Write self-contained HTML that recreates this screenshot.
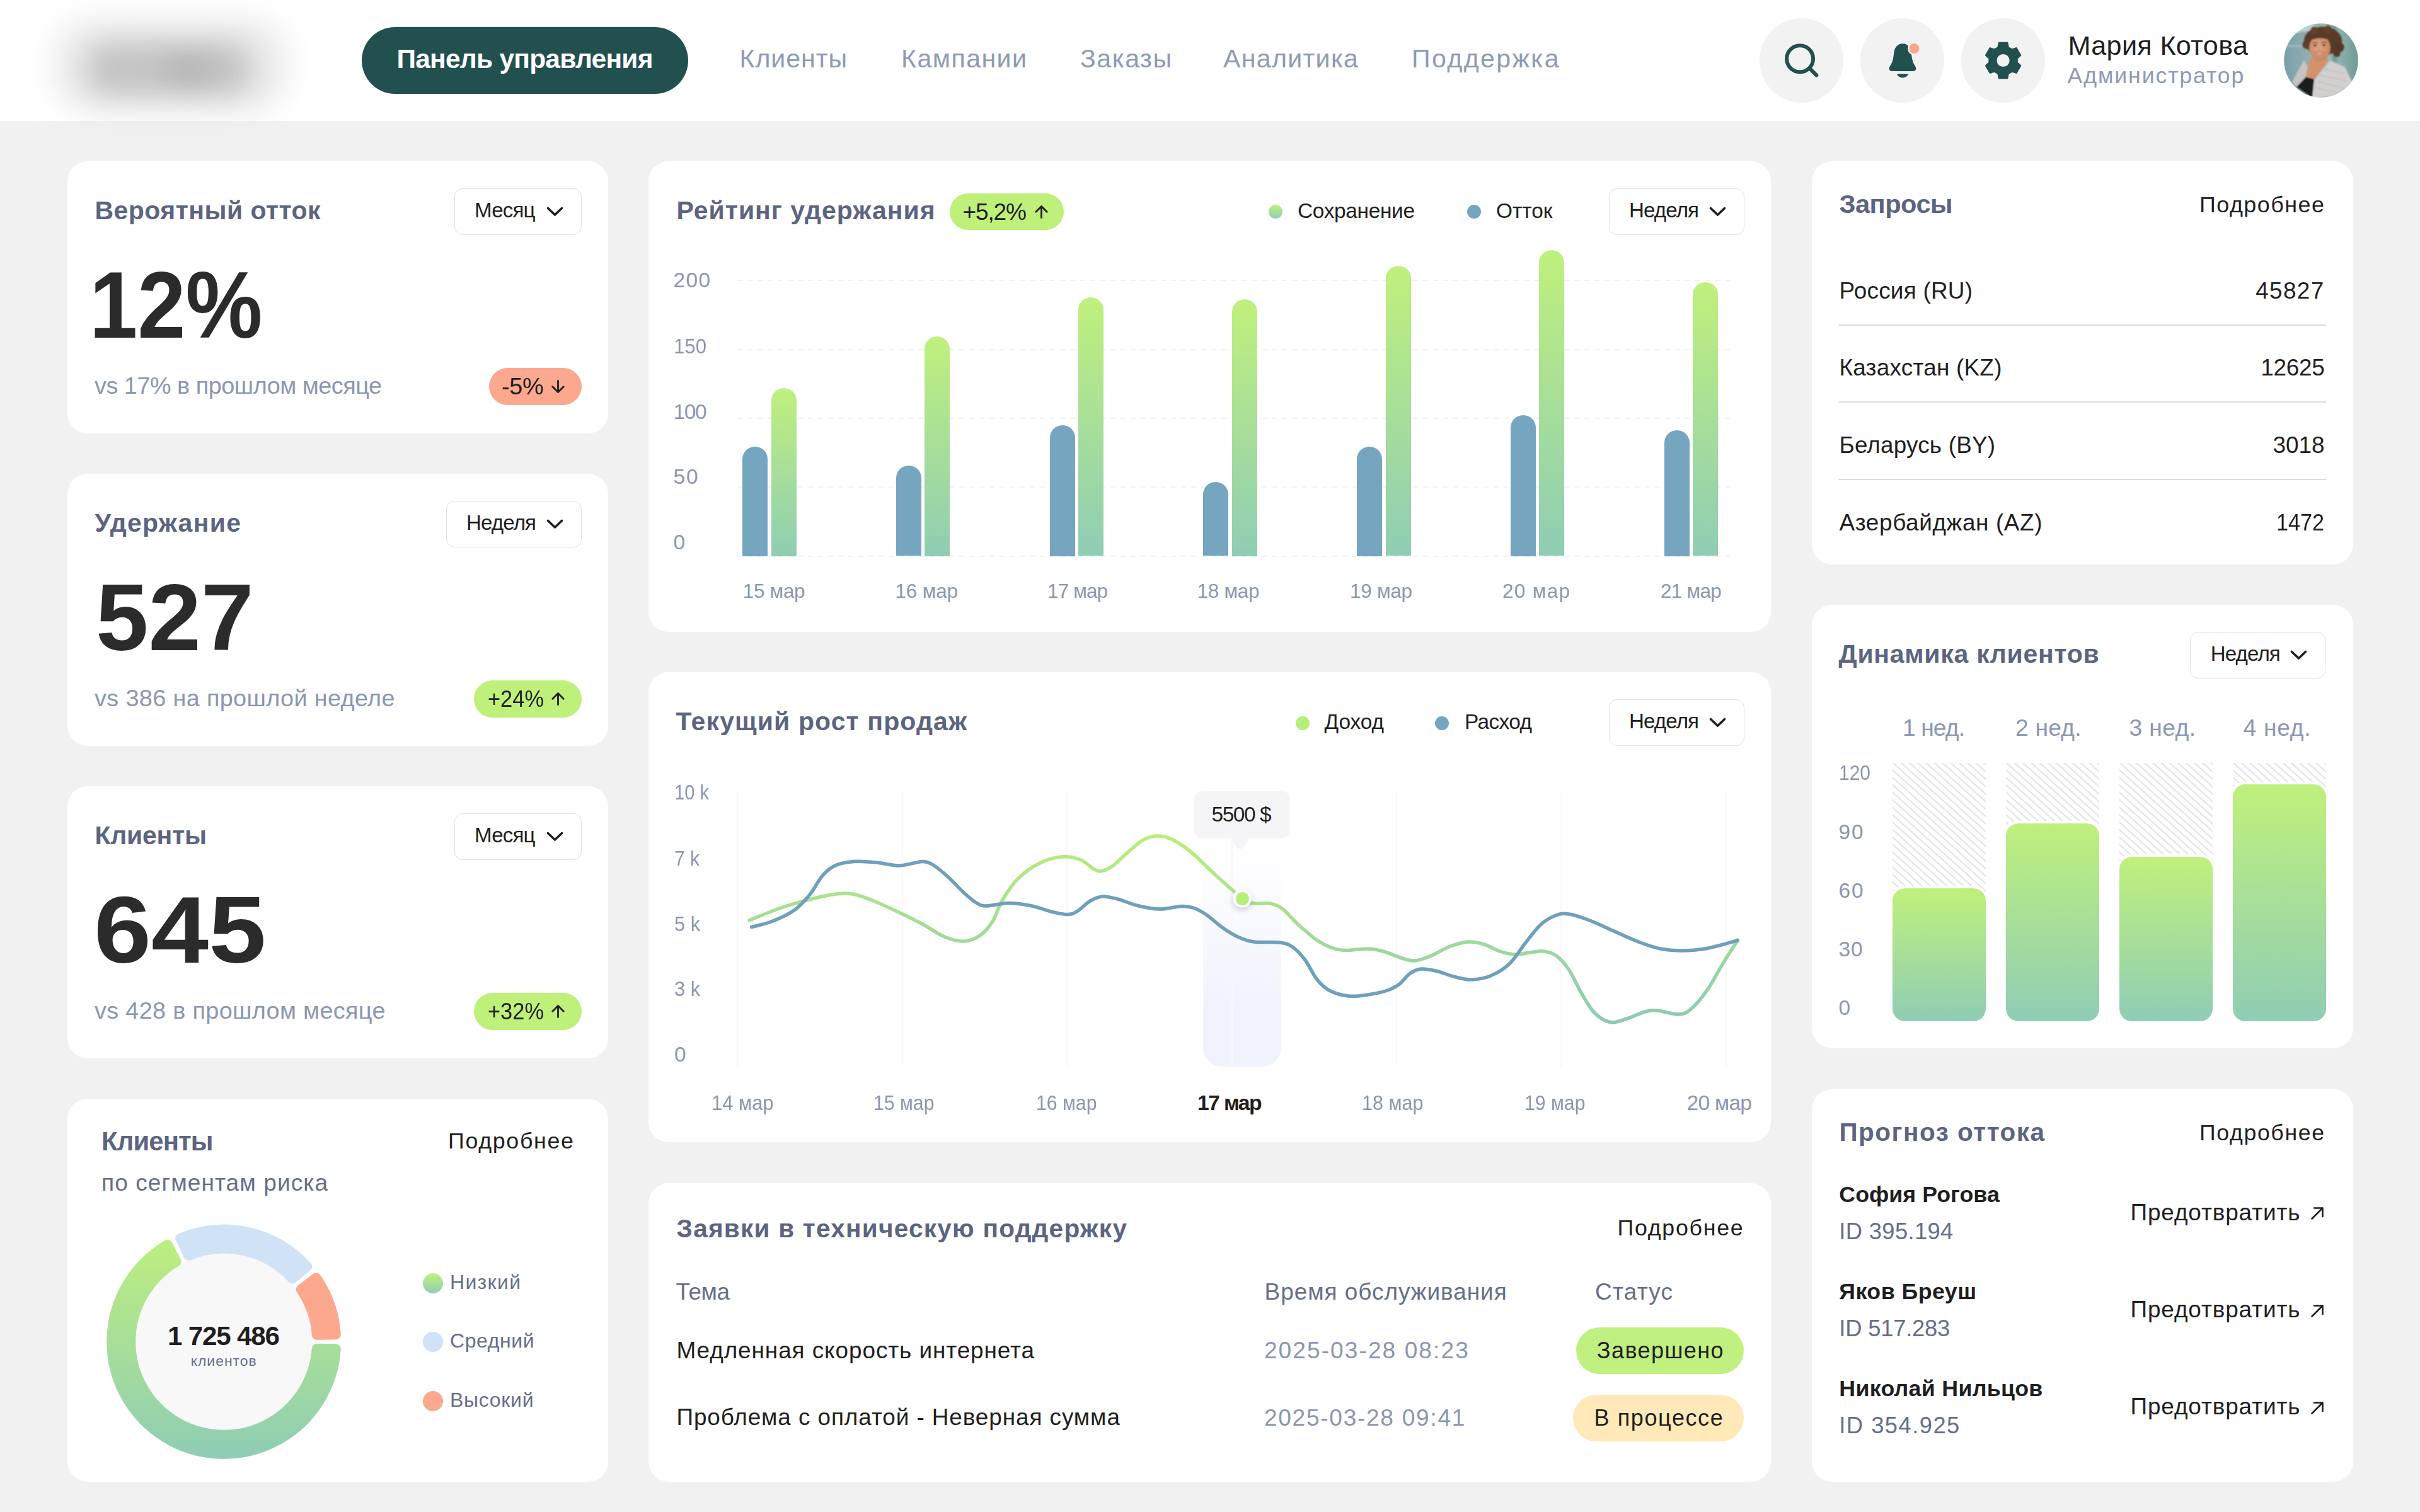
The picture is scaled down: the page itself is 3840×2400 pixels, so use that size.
<!DOCTYPE html>
<html lang="ru"><head><meta charset="utf-8"><title>Панель управления</title>
<style>
html,body{margin:0;padding:0}
body{width:3840px;height:2400px;overflow:hidden;background:#f1f1f1;font-family:"Liberation Sans",sans-serif}
#p{position:relative;width:3840px;height:2400px;overflow:hidden;background:#f1f1f1}
#p>div,#p>span,#p>svg{position:absolute;display:block}
#p>span{white-space:pre}
</style></head><body><div id="p">
<div style="left:0px;top:0px;width:3840px;height:192px;background:#fff;border-radius:0px;"></div>
<div style="left:85px;top:30px;width:370px;height:148px;background:#ebebeb;border-radius:60px;filter:blur(24px)"></div>
<div style="left:136px;top:67px;width:264px;height:84px;background:#c3c3c3;border-radius:40px;filter:blur(22px)"></div>
<div style="left:262px;top:90px;width:76px;height:40px;background:#a6a6a6;border-radius:20px;filter:blur(20px);opacity:.55"></div>
<div style="left:574px;top:42.5px;width:518px;height:106.5px;background:#21504f;border-radius:54px;"></div>
<div style="left:2791.75px;top:29px;width:133.5px;height:133.5px;background:#f2f2f2;border-radius:67px;"></div>
<div style="left:2951.75px;top:29px;width:133.5px;height:133.5px;background:#f2f2f2;border-radius:67px;"></div>
<div style="left:3111.75px;top:29px;width:133.5px;height:133.5px;background:#f2f2f2;border-radius:67px;"></div>
<svg style="left:2820px;top:56px" width="80" height="80" viewBox="2820 56 80 80"><circle cx="2856.1" cy="93.2" r="21" fill="none" stroke="#21504f" stroke-width="6"/><path d="M2871.5 108.5L2882.3 119.3" stroke="#21504f" stroke-width="6" stroke-linecap="round"/></svg>
<svg style="left:2980px;top:56px" width="80" height="80" viewBox="2980 56 80 80">
<path d="M3019 69.2C3023 69.2 3026 70.5 3028 73C3031.5 76.5 3032.3 80 3033 86C3033.8 93 3035 98.5 3037.5 102.5C3039 105 3040.3 106.5 3040.3 109C3040.3 111.3 3038.6 112.9 3036.3 112.9H3001.7C2999.4 112.9 2997.7 111.3 2997.7 109C2997.7 106.5 2999 105 3000.5 102.5C3003 98.5 3004.2 93 3005 86C3005.7 80 3006.5 76.5 3010 73C3012 70.5 3015 69.2 3019 69.2Z" fill="#21504f"/>
<path d="M3010 117.2H3028C3027 121 3023.5 123.2 3019 123.2C3014.5 123.2 3011 121 3010 117.2Z" fill="#21504f"/>
<circle cx="3037.5" cy="77.1" r="10.4" fill="#f2f2f2"/><circle cx="3037.5" cy="77.1" r="8" fill="#f9a58c"/></svg>
<svg style="left:3140px;top:56px" width="80" height="80" viewBox="3140 56 80 80"><path d="M3186.48 75.46L3184.99 68.33L3172.21 68.33L3170.72 75.46L3164.75 78.90L3157.83 76.63L3151.44 87.70L3156.87 92.56L3156.87 99.44L3151.44 104.30L3157.83 115.37L3164.75 113.10L3170.72 116.54L3172.21 123.67L3184.99 123.67L3186.48 116.54L3192.45 113.10L3199.37 115.37L3205.76 104.30L3200.33 99.44L3200.33 92.56L3205.76 87.70L3199.37 76.63L3192.45 78.90ZM3167.0 96a11.6 11.6 0 1 0 23.2 0a11.6 11.6 0 1 0 -23.2 0Z" fill="#21504f" fill-rule="evenodd" stroke="#21504f" stroke-width="3" stroke-linejoin="round"/></svg>
<svg style="left:3624px;top:37px" width="118" height="118" viewBox="0 0 118 118"><defs><clipPath id="av"><circle cx="59" cy="59" r="58.8"/></clipPath>
<linearGradient id="avbg" x1="0" y1="0" x2="1" y2="0"><stop offset="0" stop-color="#7a9ca6"/><stop offset=".35" stop-color="#8fb0b3"/><stop offset=".62" stop-color="#9bbab6"/><stop offset=".66" stop-color="#6f9795"/><stop offset=".72" stop-color="#8db2ad"/><stop offset="1" stop-color="#6c9693"/></linearGradient>
<radialGradient id="avf" cx=".45" cy=".45" r=".6"><stop offset="0" stop-color="#e2a583"/><stop offset="1" stop-color="#c58461"/></radialGradient>
<filter id="avb" x="-5%" y="-5%" width="110%" height="110%"><feGaussianBlur stdDeviation="0.9"/></filter></defs>
<g clip-path="url(#av)"><g filter="url(#avb)"><rect x="-4" y="-4" width="126" height="126" fill="url(#avbg)"/>
<path d="M20 6L50 2L48 10L16 16Z" fill="#c9d8d8" opacity=".8"/>
<path d="M4 34H40V38H4Z" fill="#a9c2c4" opacity=".6"/>
<path d="M32 58L13 93L20 101L45 119L92 113L108 93L97 70L74 59L49 88Z" fill="#c6c3c3"/>
<path d="M45 119L92 113L108 93L97 70L74 59L48 90Z" fill="#d2cfcf"/>
<path d="M60 72L96 80M56 82L100 92M52 92L100 104M50 102L92 112" stroke="#b9b6b8" stroke-width="1.2" fill="none"/>
<path d="M41 56L72 56L49 89L35 84Z" fill="#d4916c"/>
<path d="M35 85L48 88.5L45 119L20 101Z" fill="#1a1a1f"/>
<ellipse cx="62" cy="28" rx="30.5" ry="23" fill="#5a3b2c"/>
<circle cx="36" cy="34" r="7" fill="#5f3f2e"/><circle cx="88" cy="38" r="8" fill="#563829"/><circle cx="84" cy="48" r="6" fill="#5a3b2c"/><circle cx="70" cy="9" r="6" fill="#63432f"/><circle cx="48" cy="11" r="6" fill="#63432f"/>
<ellipse cx="57" cy="39.5" rx="16.8" ry="20.5" fill="url(#avf)"/>
<path d="M41 28C46 17 66 15 73 27C66 23 50 22 41 28Z" fill="#5a3b2c"/>
<ellipse cx="49.5" cy="35" rx="2.6" ry="1.5" fill="#3a2418"/><ellipse cx="63.5" cy="34.5" rx="2.6" ry="1.5" fill="#3a2418"/>
<path d="M45.5 31.5Q49.5 29.5 53.5 31.5M59.5 31Q63.5 29 67.5 31" stroke="#4a2e20" stroke-width="1.1" fill="none"/>
<path d="M55 37L54 43.5L58 43.5" stroke="#b87755" stroke-width="1" fill="none"/>
<path d="M48.5 46.5Q56.5 53 64.5 46.5Q56.5 49 48.5 46.5Z" fill="#f4e6e3" stroke="#c46a62" stroke-width="1"/>
</g></g></svg>
<div style="left:106.5px;top:256px;width:858.5px;height:432px;background:#fff;border-radius:32px;"></div>
<div style="left:720.5px;top:299px;width:202px;height:74px;box-sizing:border-box;border:1.6px solid #dfe0ea;border-radius:13px;background:#fff"></div>
<svg style="left:864.5px;top:326px" width="31" height="20" viewBox="-3 -3 31 20"><path d="M1.5 1.5L12.5 12L23.5 1.5" fill="none" stroke="#1f1f1f" stroke-width="3.6" stroke-linecap="round" stroke-linejoin="round"/></svg>
<div style="left:776px;top:584px;width:146.5px;height:58.5px;background:#fca88f;border-radius:30px;"></div>
<svg style="left:874.8px;top:603px" width="21" height="21" viewBox="0 0 21 21"><path d="M10.5 1.4V19.4M1.8 10.8L10.5 19.4L19.2 10.8" fill="none" stroke="#1f1f1f" stroke-width="2.8" stroke-linecap="round" stroke-linejoin="round"/></svg>
<div style="left:106.5px;top:752px;width:858.5px;height:432px;background:#fff;border-radius:32px;"></div>
<div style="left:707.5px;top:795px;width:215px;height:74px;box-sizing:border-box;border:1.6px solid #dfe0ea;border-radius:13px;background:#fff"></div>
<svg style="left:864.5px;top:822px" width="31" height="20" viewBox="-3 -3 31 20"><path d="M1.5 1.5L12.5 12L23.5 1.5" fill="none" stroke="#1f1f1f" stroke-width="3.6" stroke-linecap="round" stroke-linejoin="round"/></svg>
<div style="left:752px;top:1080px;width:170.5px;height:58.5px;background:#bef07a;border-radius:30px;"></div>
<svg style="left:874.8px;top:1099px" width="21" height="21" viewBox="0 0 21 21"><path d="M10.5 19.6V1.6M1.8 10.2L10.5 1.6L19.2 10.2" fill="none" stroke="#1f1f1f" stroke-width="2.8" stroke-linecap="round" stroke-linejoin="round"/></svg>
<div style="left:106.5px;top:1248px;width:858.5px;height:432px;background:#fff;border-radius:32px;"></div>
<div style="left:720.5px;top:1291px;width:202px;height:74px;box-sizing:border-box;border:1.6px solid #dfe0ea;border-radius:13px;background:#fff"></div>
<svg style="left:864.5px;top:1318px" width="31" height="20" viewBox="-3 -3 31 20"><path d="M1.5 1.5L12.5 12L23.5 1.5" fill="none" stroke="#1f1f1f" stroke-width="3.6" stroke-linecap="round" stroke-linejoin="round"/></svg>
<div style="left:752px;top:1576px;width:170.5px;height:58.5px;background:#bef07a;border-radius:30px;"></div>
<svg style="left:874.8px;top:1595px" width="21" height="21" viewBox="0 0 21 21"><path d="M10.5 19.6V1.6M1.8 10.2L10.5 1.6L19.2 10.2" fill="none" stroke="#1f1f1f" stroke-width="2.8" stroke-linecap="round" stroke-linejoin="round"/></svg>
<div style="left:106.5px;top:1744px;width:858.5px;height:607.5px;background:#fff;border-radius:32px;"></div>
<svg style="left:150px;top:1924px" width="420" height="412" viewBox="150 1924 420 412"><defs><linearGradient id="dg" gradientUnits="userSpaceOnUse" x1="0" y1="1950" x2="0" y2="2316"><stop offset="0" stop-color="#c0f07c"/><stop offset="1" stop-color="#8fcdb5"/></linearGradient></defs><circle cx="355.25" cy="2129.75" r="141" fill="#f8f8f9"/><path d="M532.87 2141.31A178 178 0 1 1 265.65 1975.95L279.59 2002.55A148 148 0 1 0 502.84 2140.71Z" fill="url(#dg)" stroke="url(#dg)" stroke-width="16" stroke-linejoin="round"/><path d="M286.34 1965.63A178 178 0 0 1 487.27 2010.36L464.11 2029.48A148 148 0 0 0 299.20 1992.77Z" fill="#cfe2f6" stroke="#cfe2f6" stroke-width="16" stroke-linejoin="round"/><path d="M501.64 2028.48A178 178 0 0 1 532.87 2118.19L502.84 2118.79A148 148 0 0 0 477.73 2046.66Z" fill="#fca88f" stroke="#fca88f" stroke-width="16" stroke-linejoin="round"/></svg>
<div style="left:670.5px;top:2021px;width:32px;height:32px;border-radius:50%;background:linear-gradient(#c0f07c,#8fcdb5)"></div>
<div style="left:670.5px;top:2114px;width:32px;height:32px;border-radius:50%;background:#cfe2f6"></div>
<div style="left:670.5px;top:2208px;width:32px;height:32px;border-radius:50%;background:#fca88f"></div>
<div style="left:1029px;top:256px;width:1781px;height:746.5px;background:#fff;border-radius:32px;"></div>
<div style="left:1506.5px;top:306.5px;width:181.5px;height:58.5px;background:#bef07a;border-radius:30px;"></div>
<svg style="left:1641.5px;top:325.5px" width="21" height="21" viewBox="0 0 21 21"><path d="M10.5 19.6V1.6M1.8 10.2L10.5 1.6L19.2 10.2" fill="none" stroke="#1f1f1f" stroke-width="2.8" stroke-linecap="round" stroke-linejoin="round"/></svg>
<div style="left:2012.5px;top:325px;width:22px;height:22px;border-radius:50%;background:linear-gradient(#c0f07c,#8fcdb5)"></div>
<div style="left:2327.5px;top:325px;width:22px;height:22px;border-radius:50%;background:#75a5bf"></div>
<div style="left:2552.5px;top:299px;width:215px;height:74px;box-sizing:border-box;border:1.6px solid #dfe0ea;border-radius:13px;background:#fff"></div>
<svg style="left:2709.5px;top:326px" width="31" height="20" viewBox="-3 -3 31 20"><path d="M1.5 1.5L12.5 12L23.5 1.5" fill="none" stroke="#1f1f1f" stroke-width="3.6" stroke-linecap="round" stroke-linejoin="round"/></svg>
<div style="left:1170px;top:444px;width:1575px;height:2px;background:repeating-linear-gradient(90deg,#f2f2f4 0 8px,transparent 8px 16px)"></div>
<div style="left:1170px;top:553.6px;width:1575px;height:2px;background:repeating-linear-gradient(90deg,#f2f2f4 0 8px,transparent 8px 16px)"></div>
<div style="left:1170px;top:663px;width:1575px;height:2px;background:repeating-linear-gradient(90deg,#f2f2f4 0 8px,transparent 8px 16px)"></div>
<div style="left:1170px;top:772.3px;width:1575px;height:2px;background:repeating-linear-gradient(90deg,#f2f2f4 0 8px,transparent 8px 16px)"></div>
<div style="left:1170px;top:881.5px;width:1575px;height:2px;background:repeating-linear-gradient(90deg,#f2f2f4 0 8px,transparent 8px 16px)"></div>
<div style="left:1178.0px;top:709px;width:40px;height:173.5px;background:#75a5bf;border-radius:20px 20px 0 0"></div>
<div style="left:1223.5px;top:616px;width:40px;height:266.5px;background:linear-gradient(#c0f07c,#8fcdb5);border-radius:20px 20px 0 0"></div>
<div style="left:1421.8px;top:738.7px;width:40px;height:143.8px;background:#75a5bf;border-radius:20px 20px 0 0"></div>
<div style="left:1467.2px;top:533.5px;width:40px;height:349.0px;background:linear-gradient(#c0f07c,#8fcdb5);border-radius:20px 20px 0 0"></div>
<div style="left:1665.5px;top:675px;width:40px;height:207.5px;background:#75a5bf;border-radius:20px 20px 0 0"></div>
<div style="left:1711.0px;top:471.6px;width:40px;height:410.9px;background:linear-gradient(#c0f07c,#8fcdb5);border-radius:20px 20px 0 0"></div>
<div style="left:1909.2px;top:765.4px;width:40px;height:117.1px;background:#75a5bf;border-radius:20px 20px 0 0"></div>
<div style="left:1954.8px;top:474.5px;width:40px;height:408.0px;background:linear-gradient(#c0f07c,#8fcdb5);border-radius:20px 20px 0 0"></div>
<div style="left:2153.0px;top:709px;width:40px;height:173.5px;background:#75a5bf;border-radius:20px 20px 0 0"></div>
<div style="left:2198.5px;top:421.6px;width:40px;height:460.9px;background:linear-gradient(#c0f07c,#8fcdb5);border-radius:20px 20px 0 0"></div>
<div style="left:2396.8px;top:659px;width:40px;height:223.5px;background:#75a5bf;border-radius:20px 20px 0 0"></div>
<div style="left:2442.2px;top:397.3px;width:40px;height:485.2px;background:linear-gradient(#c0f07c,#8fcdb5);border-radius:20px 20px 0 0"></div>
<div style="left:2640.5px;top:682.5px;width:40px;height:200.0px;background:#75a5bf;border-radius:20px 20px 0 0"></div>
<div style="left:2686.0px;top:448.3px;width:40px;height:434.2px;background:linear-gradient(#c0f07c,#8fcdb5);border-radius:20px 20px 0 0"></div>
<div style="left:1029px;top:1066.5px;width:1781px;height:746.5px;background:#fff;border-radius:32px;"></div>
<div style="left:2055.5px;top:1136.5px;width:22px;height:22px;border-radius:50%;background:#b5ee7a"></div>
<div style="left:2277px;top:1136.5px;width:22px;height:22px;border-radius:50%;background:#75a5bf"></div>
<div style="left:2552.5px;top:1109.5px;width:215px;height:74px;box-sizing:border-box;border:1.6px solid #dfe0ea;border-radius:13px;background:#fff"></div>
<svg style="left:2709.5px;top:1136.5px" width="31" height="20" viewBox="-3 -3 31 20"><path d="M1.5 1.5L12.5 12L23.5 1.5" fill="none" stroke="#1f1f1f" stroke-width="3.6" stroke-linecap="round" stroke-linejoin="round"/></svg>
<div style="left:1169px;top:1256px;width:2px;height:436.5px;background:#fcf5f7"></div>
<div style="left:1430.5px;top:1256px;width:2px;height:436.5px;background:#fcf5f7"></div>
<div style="left:1692px;top:1256px;width:2px;height:436.5px;background:#fcf5f7"></div>
<div style="left:1954px;top:1256px;width:2px;height:436.5px;background:#fcf5f7"></div>
<div style="left:2215px;top:1256px;width:2px;height:436.5px;background:#fcf5f7"></div>
<div style="left:2476px;top:1256px;width:2px;height:436.5px;background:#fcf5f7"></div>
<div style="left:2737.5px;top:1256px;width:2px;height:436.5px;background:#fcf5f7"></div>
<div style="left:1909px;top:1330px;width:124px;height:362.5px;border-radius:0 0 30px 30px;background:linear-gradient(rgba(241,243,252,0),rgba(241,243,252,.35) 30%,#f1f3fc 75%)"></div>
<div style="left:1954px;top:1256px;width:2px;height:436.5px;background:#faf6fa"></div>
<svg style="left:1150px;top:1240px" width="1650" height="470" viewBox="1150 1240 1650 470"><defs><linearGradient id="lg" gradientUnits="userSpaceOnUse" x1="0" y1="1330" x2="0" y2="1625"><stop offset="0" stop-color="#b8ef78"/><stop offset="1" stop-color="#8bcab4"/></linearGradient></defs>
<path d="M1189.0 1461.0C1196.7 1457.9 1219.8 1447.8 1235.0 1442.5C1250.2 1437.2 1265.8 1432.8 1280.0 1429.0C1294.2 1425.2 1308.3 1421.8 1320.0 1420.0C1331.7 1418.2 1340.0 1417.2 1350.0 1418.5C1360.0 1419.8 1367.5 1422.7 1380.0 1427.5C1392.5 1432.3 1410.8 1440.8 1425.0 1447.5C1439.2 1454.2 1452.5 1460.8 1465.0 1467.5C1477.5 1474.2 1489.2 1483.1 1500.0 1487.5C1510.8 1491.9 1520.8 1494.4 1530.0 1494.0C1539.2 1493.6 1547.5 1490.2 1555.0 1485.0C1562.5 1479.8 1569.2 1471.7 1575.0 1462.5C1580.8 1453.3 1583.3 1441.2 1590.0 1430.0C1596.7 1418.8 1605.0 1405.0 1615.0 1395.0C1625.0 1385.0 1638.3 1375.8 1650.0 1370.0C1661.7 1364.2 1674.2 1360.8 1685.0 1360.0C1695.8 1359.2 1706.7 1361.8 1715.0 1365.0C1723.3 1368.2 1729.6 1376.1 1735.0 1379.0C1740.4 1381.9 1742.5 1383.2 1747.5 1382.5C1752.5 1381.8 1757.9 1380.0 1765.0 1375.0C1772.1 1370.0 1781.7 1359.6 1790.0 1352.5C1798.3 1345.4 1807.1 1336.8 1815.0 1332.5C1822.9 1328.2 1830.0 1327.0 1837.5 1327.0C1845.0 1327.0 1851.2 1328.2 1860.0 1332.5C1868.8 1336.8 1878.3 1342.9 1890.0 1352.5C1901.7 1362.1 1916.4 1377.8 1930.0 1390.0C1943.6 1402.2 1961.5 1418.7 1971.5 1426.0C1981.5 1433.3 1982.8 1432.7 1990.0 1434.0C1997.2 1435.3 2007.5 1432.6 2015.0 1434.0C2022.5 1435.4 2027.5 1436.9 2035.0 1442.5C2042.5 1448.1 2050.8 1459.2 2060.0 1467.5C2069.2 1475.8 2080.8 1486.2 2090.0 1492.5C2099.2 1498.8 2107.5 1502.3 2115.0 1505.0C2122.5 1507.7 2125.8 1508.3 2135.0 1508.5C2144.2 1508.7 2160.0 1505.8 2170.0 1506.0C2180.0 1506.2 2185.8 1507.5 2195.0 1510.0C2204.2 1512.5 2216.7 1518.5 2225.0 1521.0C2233.3 1523.5 2237.5 1525.6 2245.0 1525.0C2252.5 1524.4 2260.8 1521.2 2270.0 1517.5C2279.2 1513.8 2290.0 1506.2 2300.0 1502.5C2310.0 1498.8 2320.8 1495.6 2330.0 1495.0C2339.2 1494.4 2346.7 1496.5 2355.0 1499.0C2363.3 1501.5 2371.7 1507.3 2380.0 1510.0C2388.3 1512.7 2396.7 1514.8 2405.0 1515.0C2413.3 1515.2 2422.5 1512.3 2430.0 1511.5C2437.5 1510.7 2443.3 1509.0 2450.0 1510.0C2456.7 1511.0 2463.3 1512.5 2470.0 1517.5C2476.7 1522.5 2483.3 1530.0 2490.0 1540.0C2496.7 1550.0 2503.3 1566.2 2510.0 1577.5C2516.7 1588.8 2522.5 1600.0 2530.0 1607.5C2537.5 1615.0 2546.7 1620.8 2555.0 1622.5C2563.3 1624.2 2570.8 1620.2 2580.0 1617.5C2589.2 1614.8 2601.7 1608.2 2610.0 1606.0C2618.3 1603.8 2620.8 1603.3 2630.0 1604.0C2639.2 1604.7 2655.8 1610.7 2665.0 1610.0C2674.2 1609.3 2677.5 1606.7 2685.0 1600.0C2692.5 1593.3 2701.7 1582.1 2710.0 1570.0C2718.3 1557.9 2727.1 1540.4 2735.0 1527.5C2742.9 1514.6 2753.8 1498.3 2757.5 1492.5" fill="none" stroke="url(#lg)" stroke-width="5.5" stroke-linecap="round" stroke-linejoin="round"/>
<path d="M1192.5 1471.5C1197.9 1470.0 1213.8 1466.9 1225.0 1462.5C1236.2 1458.1 1250.0 1452.1 1260.0 1445.0C1270.0 1437.9 1277.5 1429.2 1285.0 1420.0C1292.5 1410.8 1298.3 1397.7 1305.0 1390.0C1311.7 1382.3 1316.7 1377.8 1325.0 1374.0C1333.3 1370.2 1344.2 1368.3 1355.0 1367.5C1365.8 1366.7 1378.3 1367.9 1390.0 1369.0C1401.7 1370.1 1415.0 1373.8 1425.0 1374.0C1435.0 1374.2 1443.3 1371.1 1450.0 1370.0C1456.7 1368.9 1460.0 1367.1 1465.0 1367.5C1470.0 1367.9 1473.3 1368.3 1480.0 1372.5C1486.7 1376.7 1496.7 1385.0 1505.0 1392.5C1513.3 1400.0 1522.5 1410.7 1530.0 1417.5C1537.5 1424.3 1544.2 1430.1 1550.0 1433.5C1555.8 1436.9 1556.7 1438.0 1565.0 1438.0C1573.3 1438.0 1588.3 1433.6 1600.0 1433.5C1611.7 1433.4 1623.3 1435.2 1635.0 1437.5C1646.7 1439.8 1660.0 1445.2 1670.0 1447.5C1680.0 1449.8 1688.3 1451.8 1695.0 1451.5C1701.7 1451.2 1704.2 1449.6 1710.0 1446.0C1715.8 1442.4 1723.3 1433.8 1730.0 1430.0C1736.7 1426.2 1742.5 1423.4 1750.0 1423.0C1757.5 1422.6 1765.8 1425.1 1775.0 1427.5C1784.2 1429.9 1794.2 1434.9 1805.0 1437.5C1815.8 1440.1 1828.3 1442.8 1840.0 1443.0C1851.7 1443.2 1865.8 1438.8 1875.0 1438.5C1884.2 1438.2 1888.3 1439.2 1895.0 1441.5C1901.7 1443.8 1907.5 1447.3 1915.0 1452.5C1922.5 1457.7 1931.7 1466.7 1940.0 1472.5C1948.3 1478.3 1956.7 1483.8 1965.0 1487.5C1973.3 1491.2 1979.2 1493.6 1990.0 1495.0C2000.8 1496.4 2020.0 1494.8 2030.0 1496.0C2040.0 1497.2 2043.3 1498.1 2050.0 1502.5C2056.7 1506.9 2063.3 1513.8 2070.0 1522.5C2076.7 1531.2 2083.3 1546.7 2090.0 1555.0C2096.7 1563.3 2101.7 1568.2 2110.0 1572.5C2118.3 1576.8 2130.0 1579.9 2140.0 1581.0C2150.0 1582.1 2160.0 1580.4 2170.0 1579.0C2180.0 1577.6 2191.7 1575.2 2200.0 1572.5C2208.3 1569.8 2213.8 1567.1 2220.0 1562.5C2226.2 1557.9 2231.7 1549.1 2237.5 1545.0C2243.3 1540.9 2247.9 1538.6 2255.0 1538.0C2262.1 1537.4 2270.8 1539.3 2280.0 1541.5C2289.2 1543.7 2300.8 1548.8 2310.0 1551.0C2319.2 1553.2 2325.8 1555.3 2335.0 1555.0C2344.2 1554.7 2355.0 1553.2 2365.0 1549.0C2375.0 1544.8 2385.8 1538.6 2395.0 1530.0C2404.2 1521.4 2411.7 1507.9 2420.0 1497.5C2428.3 1487.1 2436.7 1475.0 2445.0 1467.5C2453.3 1460.0 2462.5 1455.2 2470.0 1452.5C2477.5 1449.8 2481.7 1449.8 2490.0 1451.0C2498.3 1452.2 2508.3 1455.6 2520.0 1460.0C2531.7 1464.4 2546.7 1471.7 2560.0 1477.5C2573.3 1483.3 2587.5 1490.2 2600.0 1495.0C2612.5 1499.8 2623.3 1503.7 2635.0 1506.0C2646.7 1508.3 2658.3 1509.0 2670.0 1509.0C2681.7 1509.0 2694.2 1507.7 2705.0 1506.0C2715.8 1504.3 2726.2 1501.2 2735.0 1499.0C2743.8 1496.8 2753.8 1493.6 2757.5 1492.5" fill="none" stroke="#6fa0bb" stroke-width="5.5" stroke-linecap="round" stroke-linejoin="round"/>
</svg>
<div style="left:1895px;top:1256px;width:152px;height:74px;background:#f5f5f7;border-radius:12px;"></div>
<div style="left:1955px;top:1322px;width:26px;height:26px;background:#f5f5f7;transform:rotate(45deg) scale(.8,.8);border-radius:4px"></div>
<div style="left:1956px;top:1411px;width:30px;height:30px;border-radius:50%;background:#fff;box-shadow:0 4px 10px rgba(0,0,0,.18)"></div>
<div style="left:1960.5px;top:1415.5px;width:21px;height:21px;border-radius:50%;background:#b5ee7a"></div>
<div style="left:1029px;top:1877.5px;width:1781px;height:474px;background:#fff;border-radius:32px;"></div>
<div style="left:2500.7px;top:2106.5px;width:266.8px;height:74.4px;background:#c0f07f;border-radius:37.2px;"></div>
<div style="left:2495.8px;top:2214px;width:271.7px;height:73.7px;background:#ffe9b8;border-radius:37px;"></div>
<div style="left:2874.5px;top:256px;width:859px;height:639.5px;background:#fff;border-radius:32px;"></div>
<div style="left:2917.5px;top:514.5px;width:773px;height:2px;background:#d9dcea;border-radius:0px;"></div>
<div style="left:2917.5px;top:637.0px;width:773px;height:2px;background:#d9dcea;border-radius:0px;"></div>
<div style="left:2917.5px;top:760.0px;width:773px;height:2px;background:#d9dcea;border-radius:0px;"></div>
<div style="left:2874.5px;top:960px;width:859px;height:703.5px;background:#fff;border-radius:32px;"></div>
<div style="left:3475.3px;top:1003px;width:215px;height:74px;box-sizing:border-box;border:1.6px solid #dfe0ea;border-radius:13px;background:#fff"></div>
<svg style="left:3632.3px;top:1030px" width="31" height="20" viewBox="-3 -3 31 20"><path d="M1.5 1.5L12.5 12L23.5 1.5" fill="none" stroke="#1f1f1f" stroke-width="3.6" stroke-linecap="round" stroke-linejoin="round"/></svg>
<div style="left:3002.7px;top:1211px;width:148px;height:400px;background:repeating-linear-gradient(42deg,#fff 0 5.9px,#e5e6ea 6.5px 8.3px,#fff 8.8px)"></div>
<div style="left:2998.7px;top:1406.4px;width:156px;height:218.4px;background:#fff;border-radius:23px"></div>
<div style="left:3002.7px;top:1410.4px;width:148px;height:210.4px;background:linear-gradient(#c0f07c,#8fcdb5);border-radius:20px"></div>
<div style="left:3182.7px;top:1211px;width:148px;height:400px;background:repeating-linear-gradient(42deg,#fff 0 5.9px,#e5e6ea 6.5px 8.3px,#fff 8.8px)"></div>
<div style="left:3178.7px;top:1302.8px;width:156px;height:322.0px;background:#fff;border-radius:23px"></div>
<div style="left:3182.7px;top:1306.8px;width:148px;height:314.0px;background:linear-gradient(#c0f07c,#8fcdb5);border-radius:20px"></div>
<div style="left:3362.7px;top:1211px;width:148px;height:400px;background:repeating-linear-gradient(42deg,#fff 0 5.9px,#e5e6ea 6.5px 8.3px,#fff 8.8px)"></div>
<div style="left:3358.7px;top:1356px;width:156px;height:268.8px;background:#fff;border-radius:23px"></div>
<div style="left:3362.7px;top:1360px;width:148px;height:260.8px;background:linear-gradient(#c0f07c,#8fcdb5);border-radius:20px"></div>
<div style="left:3542.7px;top:1211px;width:148px;height:400px;background:repeating-linear-gradient(42deg,#fff 0 5.9px,#e5e6ea 6.5px 8.3px,#fff 8.8px)"></div>
<div style="left:3538.7px;top:1241px;width:156px;height:383.8px;background:#fff;border-radius:23px"></div>
<div style="left:3542.7px;top:1245px;width:148px;height:375.8px;background:linear-gradient(#c0f07c,#8fcdb5);border-radius:20px"></div>
<div style="left:2874.5px;top:1728.5px;width:859px;height:623px;background:#fff;border-radius:32px;"></div>
<svg style="left:3664px;top:1913.4px" width="26" height="26" viewBox="0 0 26 26"><path d="M4.5 21.5L21.5 4.5M8 4.5H21.5V18" fill="none" stroke="#1f1f1f" stroke-width="2.6" stroke-linecap="round" stroke-linejoin="round"/></svg>
<svg style="left:3664px;top:2067.6px" width="26" height="26" viewBox="0 0 26 26"><path d="M4.5 21.5L21.5 4.5M8 4.5H21.5V18" fill="none" stroke="#1f1f1f" stroke-width="2.6" stroke-linecap="round" stroke-linejoin="round"/></svg>
<svg style="left:3664px;top:2221.9px" width="26" height="26" viewBox="0 0 26 26"><path d="M4.5 21.5L21.5 4.5M8 4.5H21.5V18" fill="none" stroke="#1f1f1f" stroke-width="2.6" stroke-linecap="round" stroke-linejoin="round"/></svg>
<span style="top:73.1px;font-size:42.44px;line-height:42.44px;color:#fff;font-weight:700;letter-spacing:-0.75px;left:629.5px;">Панель управления</span>
<span style="top:73.2px;font-size:41.13px;line-height:41.13px;color:#8e9ab6;letter-spacing:0.93px;left:1173.5px;">Клиенты</span>
<span style="top:73.2px;font-size:41.13px;line-height:41.13px;color:#8e9ab6;letter-spacing:1.44px;left:1430.0px;">Кампании</span>
<span style="top:73.2px;font-size:41.13px;line-height:41.13px;color:#8e9ab6;letter-spacing:1.51px;left:1714.0px;">Заказы</span>
<span style="top:73.2px;font-size:41.13px;line-height:41.13px;color:#8e9ab6;letter-spacing:1.30px;left:1941.0px;">Аналитика</span>
<span style="top:73.2px;font-size:41.13px;line-height:41.13px;color:#8e9ab6;letter-spacing:2.37px;left:2240.0px;">Поддержка</span>
<span style="top:51.3px;font-size:43.17px;line-height:43.17px;color:#1f1f1f;letter-spacing:0.33px;left:3281.5px;">Мария Котова</span>
<span style="top:102.5px;font-size:35.61px;line-height:35.61px;color:#8e9ab6;letter-spacing:1.90px;left:3280.6px;">Администратор</span>
<span style="top:314.0px;font-size:40.99px;line-height:40.99px;color:#5c6481;font-weight:700;letter-spacing:0.47px;left:150.5px;">Вероятный отток</span>
<span style="top:317.3px;font-size:33.14px;line-height:33.14px;color:#1f1f1f;letter-spacing:-0.84px;left:753.0px;">Месяц</span>
<span style="top:410.3px;font-size:149.71px;line-height:149.71px;color:#2b2b2b;font-weight:700;left:141.6px;transform:scaleX(0.9161);transform-origin:0 0;">12%</span>
<span style="top:594.0px;font-size:37.79px;line-height:37.79px;color:#8b96b2;letter-spacing:-0.47px;left:150.0px;">vs 17% в прошлом месяце</span>
<span style="top:594.6px;font-size:37.79px;line-height:37.79px;color:#1f1f1f;letter-spacing:-0.34px;left:796.0px;">-5%</span>
<span style="top:810.0px;font-size:40.99px;line-height:40.99px;color:#5c6481;font-weight:700;letter-spacing:1.27px;left:150.5px;">Удержание</span>
<span style="top:813.3px;font-size:33.14px;line-height:33.14px;color:#1f1f1f;letter-spacing:-0.91px;left:740.0px;">Неделя</span>
<span style="top:906.3px;font-size:149.71px;line-height:149.71px;color:#2b2b2b;font-weight:700;left:151.8px;transform:scaleX(1.0029);transform-origin:0 0;">527</span>
<span style="top:1090.0px;font-size:37.79px;line-height:37.79px;color:#8b96b2;letter-spacing:0.37px;left:150.0px;">vs 386 на прошлой неделе</span>
<span style="top:1090.6px;font-size:37.79px;line-height:37.79px;color:#1f1f1f;left:773.5px;transform:scaleX(0.9111);transform-origin:0 0;">+24%</span>
<span style="top:1306.0px;font-size:40.99px;line-height:40.99px;color:#5c6481;font-weight:700;letter-spacing:-0.23px;left:150.5px;">Клиенты</span>
<span style="top:1309.3px;font-size:33.14px;line-height:33.14px;color:#1f1f1f;letter-spacing:-0.84px;left:753.0px;">Месяц</span>
<span style="top:1402.3px;font-size:149.71px;line-height:149.71px;color:#2b2b2b;font-weight:700;left:148.8px;transform:scaleX(1.0942);transform-origin:0 0;">645</span>
<span style="top:1586.0px;font-size:37.79px;line-height:37.79px;color:#8b96b2;letter-spacing:0.35px;left:150.0px;">vs 428 в прошлом месяце</span>
<span style="top:1586.6px;font-size:37.79px;line-height:37.79px;color:#1f1f1f;left:773.5px;transform:scaleX(0.9111);transform-origin:0 0;">+32%</span>
<span style="top:1790.8px;font-size:41.86px;line-height:41.86px;color:#5c6481;font-weight:700;letter-spacing:-0.86px;left:161.0px;">Клиенты</span>
<span style="top:1793.7px;font-size:35.76px;line-height:35.76px;color:#1f1f1f;letter-spacing:1.70px;left:711.0px;">Подробнее</span>
<span style="top:1858.6px;font-size:37.06px;line-height:37.06px;color:#676e8b;letter-spacing:1.09px;left:161.0px;">по сегментам риска</span>
<span style="top:2099.8px;font-size:42.15px;line-height:42.15px;color:#1f1f1f;font-weight:700;letter-spacing:-1.19px;left:266.0px;">1 725 486</span>
<span style="top:2149.2px;font-size:22.97px;line-height:22.97px;color:#676e8b;letter-spacing:0.98px;left:302.7px;">клиентов</span>
<span style="top:2019.1px;font-size:31.98px;line-height:31.98px;color:#676e8b;letter-spacing:1.34px;left:714.0px;">Низкий</span>
<span style="top:2112.1px;font-size:31.98px;line-height:31.98px;color:#676e8b;letter-spacing:0.59px;left:714.0px;">Средний</span>
<span style="top:2206.1px;font-size:31.98px;line-height:31.98px;color:#676e8b;letter-spacing:0.73px;left:714.0px;">Высокий</span>
<span style="top:314.0px;font-size:40.99px;line-height:40.99px;color:#5c6481;font-weight:700;letter-spacing:1.00px;left:1073.5px;">Рейтинг удержания</span>
<span style="top:317.6px;font-size:37.06px;line-height:37.06px;color:#1f1f1f;letter-spacing:-1.14px;left:1527.5px;">+5,2%</span>
<span style="top:317.7px;font-size:33.43px;line-height:33.43px;color:#1f1f1f;letter-spacing:-0.33px;left:2059.0px;">Сохранение</span>
<span style="top:317.7px;font-size:33.43px;line-height:33.43px;color:#1f1f1f;letter-spacing:0.01px;left:2374.0px;">Отток</span>
<span style="top:317.3px;font-size:33.14px;line-height:33.14px;color:#1f1f1f;letter-spacing:-0.91px;left:2585.0px;">Неделя</span>
<span style="top:428.2px;font-size:33.43px;line-height:33.43px;color:#8b96b2;letter-spacing:1.37px;left:1068.5px;">200</span>
<span style="top:532.6px;font-size:33.43px;line-height:33.43px;color:#8b96b2;left:1068.5px;transform:scaleX(0.9325);transform-origin:0 0;">150</span>
<span style="top:636.8px;font-size:33.43px;line-height:33.43px;color:#8b96b2;letter-spacing:-1.38px;left:1068.5px;">100</span>
<span style="top:740.2px;font-size:33.43px;line-height:33.43px;color:#8b96b2;letter-spacing:1.81px;left:1068.5px;">50</span>
<span style="top:844.2px;font-size:33.43px;line-height:33.43px;color:#8b96b2;letter-spacing:0.41px;left:1068.5px;">0</span>
<span style="top:923.0px;font-size:31.4px;line-height:31.4px;color:#8b96b2;letter-spacing:-0.25px;left:1178.7px;">15 мар</span>
<span style="top:923.0px;font-size:31.4px;line-height:31.4px;color:#8b96b2;letter-spacing:-0.13px;left:1420.5px;">16 мар</span>
<span style="top:923.0px;font-size:31.4px;line-height:31.4px;color:#8b96b2;letter-spacing:-0.83px;left:1662.0px;">17 мар</span>
<span style="top:923.0px;font-size:31.4px;line-height:31.4px;color:#8b96b2;letter-spacing:-0.25px;left:1899.6px;">18 мар</span>
<span style="top:923.0px;font-size:31.4px;line-height:31.4px;color:#8b96b2;letter-spacing:-0.23px;left:2142.0px;">19 мар</span>
<span style="top:923.0px;font-size:31.4px;line-height:31.4px;color:#8b96b2;letter-spacing:1.37px;left:2384.0px;">20 мар</span>
<span style="top:923.0px;font-size:31.4px;line-height:31.4px;color:#8b96b2;letter-spacing:-0.71px;left:2635.0px;">21 мар</span>
<span style="top:1124.6px;font-size:40.99px;line-height:40.99px;color:#5c6481;font-weight:700;letter-spacing:1.12px;left:1072.5px;">Текущий рост продаж</span>
<span style="top:1129.2px;font-size:33.43px;line-height:33.43px;color:#1f1f1f;letter-spacing:-0.11px;left:2101.5px;">Доход</span>
<span style="top:1129.2px;font-size:33.43px;line-height:33.43px;color:#1f1f1f;letter-spacing:-0.63px;left:2324.0px;">Расход</span>
<span style="top:1127.8px;font-size:33.14px;line-height:33.14px;color:#1f1f1f;letter-spacing:-0.91px;left:2585.0px;">Неделя</span>
<span style="top:1241.2px;font-size:33.43px;line-height:33.43px;color:#8b96b2;left:1070.0px;transform:scaleX(0.8704);transform-origin:0 0;">10 k</span>
<span style="top:1345.7px;font-size:33.43px;line-height:33.43px;color:#8b96b2;left:1070.0px;transform:scaleX(0.8970);transform-origin:0 0;">7 k</span>
<span style="top:1449.7px;font-size:33.43px;line-height:33.43px;color:#8b96b2;left:1070.0px;transform:scaleX(0.9194);transform-origin:0 0;">5 k</span>
<span style="top:1553.2px;font-size:33.43px;line-height:33.43px;color:#8b96b2;left:1070.0px;transform:scaleX(0.9194);transform-origin:0 0;">3 k</span>
<span style="top:1657.2px;font-size:33.43px;line-height:33.43px;color:#8b96b2;letter-spacing:-0.59px;left:1070.0px;">0</span>
<span style="top:1275.7px;font-size:33.43px;line-height:33.43px;color:#1f1f1f;letter-spacing:-1.45px;left:1922.5px;">5500 $</span>
<span style="top:1733.7px;font-size:33.58px;line-height:33.58px;color:#8b96b2;left:1129.0px;transform:scaleX(0.9195);transform-origin:0 0;">14 мар</span>
<span style="top:1733.7px;font-size:33.58px;line-height:33.58px;color:#8b96b2;left:1386.0px;transform:scaleX(0.9008);transform-origin:0 0;">15 мар</span>
<span style="top:1733.7px;font-size:33.58px;line-height:33.58px;color:#8b96b2;left:1643.5px;transform:scaleX(0.9008);transform-origin:0 0;">16 мар</span>
<span style="top:1733.7px;font-size:33.58px;line-height:33.58px;color:#1f1f1f;font-weight:700;letter-spacing:-1.55px;left:1900.0px;">17 мар</span>
<span style="top:1733.7px;font-size:33.58px;line-height:33.58px;color:#8b96b2;left:2161.0px;transform:scaleX(0.9102);transform-origin:0 0;">18 мар</span>
<span style="top:1733.7px;font-size:33.58px;line-height:33.58px;color:#8b96b2;left:2418.5px;transform:scaleX(0.9008);transform-origin:0 0;">19 мар</span>
<span style="top:1733.7px;font-size:33.58px;line-height:33.58px;color:#8b96b2;letter-spacing:-0.72px;left:2676.5px;">20 мар</span>
<span style="top:1929.7px;font-size:40.55px;line-height:40.55px;color:#5c6481;font-weight:700;letter-spacing:1.24px;left:1073.5px;">Заявки в техническую поддержку</span>
<span style="top:1932.4px;font-size:35.76px;line-height:35.76px;color:#1f1f1f;letter-spacing:1.72px;left:2566.5px;">Подробнее</span>
<span style="top:2032.8px;font-size:36.92px;line-height:36.92px;color:#676e8b;letter-spacing:-0.47px;left:1072.5px;">Тема</span>
<span style="top:2032.8px;font-size:36.92px;line-height:36.92px;color:#676e8b;letter-spacing:0.98px;left:2006.6px;">Время обслуживания</span>
<span style="top:2032.8px;font-size:36.92px;line-height:36.92px;color:#676e8b;letter-spacing:1.27px;left:2531.0px;">Статус</span>
<span style="top:2125.6px;font-size:36.92px;line-height:36.92px;color:#1f1f1f;letter-spacing:0.92px;left:1073.5px;">Медленная скорость интернета</span>
<span style="top:2125.4px;font-size:37.06px;line-height:37.06px;color:#8b96b2;letter-spacing:2.09px;left:2005.9px;">2025-03-28 08:23</span>
<span style="top:2125.8px;font-size:36.05px;line-height:36.05px;color:#1f1f1f;letter-spacing:1.39px;left:2533.8px;">Завершено</span>
<span style="top:2232.4px;font-size:36.92px;line-height:36.92px;color:#1f1f1f;letter-spacing:0.91px;left:1073.5px;">Проблема с оплатой - Неверная сумма</span>
<span style="top:2232.2px;font-size:37.06px;line-height:37.06px;color:#8b96b2;letter-spacing:1.73px;left:2005.9px;">2025-03-28 09:41</span>
<span style="top:2232.9px;font-size:36.05px;line-height:36.05px;color:#1f1f1f;letter-spacing:1.58px;left:2529.5px;">В процессе</span>
<span style="top:303.3px;font-size:41.57px;line-height:41.57px;color:#5c6481;font-weight:700;letter-spacing:-0.52px;left:2918.5px;">Запросы</span>
<span style="top:308.1px;font-size:35.9px;line-height:35.9px;color:#1f1f1f;letter-spacing:1.48px;left:3490.0px;">Подробнее</span>
<span style="top:443.5px;font-size:36.92px;line-height:36.92px;color:#1f1f1f;letter-spacing:0.23px;left:2918.5px;">Россия (RU)</span>
<span style="top:443.5px;font-size:36.92px;line-height:36.92px;color:#1f1f1f;letter-spacing:1.34px;right:151.5px;">45827</span>
<span style="top:566.0px;font-size:36.92px;line-height:36.92px;color:#1f1f1f;letter-spacing:0.23px;left:2918.5px;">Казахстан (KZ)</span>
<span style="top:566.0px;font-size:36.92px;line-height:36.92px;color:#1f1f1f;letter-spacing:-0.29px;right:151.5px;">12625</span>
<span style="top:689.0px;font-size:36.92px;line-height:36.92px;color:#1f1f1f;letter-spacing:0.17px;left:2918.5px;">Беларусь (BY)</span>
<span style="top:689.0px;font-size:36.92px;line-height:36.92px;color:#1f1f1f;letter-spacing:-0.04px;right:151.5px;">3018</span>
<span style="top:812.0px;font-size:36.92px;line-height:36.92px;color:#1f1f1f;letter-spacing:0.62px;left:2918.5px;">Азербайджан (AZ)</span>
<span style="top:812.0px;font-size:36.92px;line-height:36.92px;color:#1f1f1f;right:151.5px;transform:scaleX(0.9256);transform-origin:100% 0;">1472</span>
<span style="top:1018.0px;font-size:40.99px;line-height:40.99px;color:#5c6481;font-weight:700;letter-spacing:0.72px;left:2917.5px;">Динамика клиентов</span>
<span style="top:1021.3px;font-size:33.14px;line-height:33.14px;color:#1f1f1f;letter-spacing:-0.91px;left:3507.8px;">Неделя</span>
<span style="top:1136.5px;font-size:37.21px;line-height:37.21px;color:#8b96b2;letter-spacing:-0.90px;left:3019.0px;">1 нед.</span>
<span style="top:1136.5px;font-size:37.21px;line-height:37.21px;color:#8b96b2;letter-spacing:0.22px;left:3198.0px;">2 нед.</span>
<span style="top:1136.5px;font-size:37.21px;line-height:37.21px;color:#8b96b2;letter-spacing:0.40px;left:3378.5px;">3 нед.</span>
<span style="top:1136.5px;font-size:37.21px;line-height:37.21px;color:#8b96b2;letter-spacing:0.68px;left:3559.6px;">4 нед.</span>
<span style="top:1210.2px;font-size:33.43px;line-height:33.43px;color:#8b96b2;left:2917.5px;transform:scaleX(0.8966);transform-origin:0 0;">120</span>
<span style="top:1303.5px;font-size:33.43px;line-height:33.43px;color:#8b96b2;letter-spacing:1.81px;left:2917.5px;">90</span>
<span style="top:1396.8px;font-size:33.43px;line-height:33.43px;color:#8b96b2;letter-spacing:1.81px;left:2917.5px;">60</span>
<span style="top:1490.2px;font-size:33.43px;line-height:33.43px;color:#8b96b2;letter-spacing:0.81px;left:2917.5px;">30</span>
<span style="top:1583.2px;font-size:33.43px;line-height:33.43px;color:#8b96b2;letter-spacing:0.41px;left:2917.5px;">0</span>
<span style="top:1776.5px;font-size:40.55px;line-height:40.55px;color:#5c6481;font-weight:700;letter-spacing:1.48px;left:2918.5px;">Прогноз оттока</span>
<span style="top:1780.7px;font-size:35.61px;line-height:35.61px;color:#1f1f1f;letter-spacing:1.67px;left:3490.0px;">Подробнее</span>
<span style="top:1878.8px;font-size:35.76px;line-height:35.76px;color:#1f1f1f;font-weight:700;letter-spacing:0.03px;left:2918.3px;">София Рогова</span>
<span style="top:1936.6px;font-size:36.34px;line-height:36.34px;color:#676e8b;letter-spacing:0.36px;left:2918.3px;">ID 395.194</span>
<span style="top:1906.7px;font-size:36.92px;line-height:36.92px;color:#1f1f1f;letter-spacing:0.88px;left:3380.5px;">Предотвратить</span>
<span style="top:2033.0px;font-size:35.76px;line-height:35.76px;color:#1f1f1f;font-weight:700;letter-spacing:0.47px;left:2918.3px;">Яков Бреуш</span>
<span style="top:2090.8px;font-size:36.34px;line-height:36.34px;color:#676e8b;letter-spacing:-0.19px;left:2918.3px;">ID 517.283</span>
<span style="top:2060.9px;font-size:36.92px;line-height:36.92px;color:#1f1f1f;letter-spacing:0.88px;left:3380.5px;">Предотвратить</span>
<span style="top:2187.3px;font-size:35.76px;line-height:35.76px;color:#1f1f1f;font-weight:700;letter-spacing:0.29px;left:2918.3px;">Николай Нильцов</span>
<span style="top:2245.1px;font-size:36.34px;line-height:36.34px;color:#676e8b;letter-spacing:1.47px;left:2918.3px;">ID 354.925</span>
<span style="top:2215.2px;font-size:36.92px;line-height:36.92px;color:#1f1f1f;letter-spacing:0.88px;left:3380.5px;">Предотвратить</span>
</div></body></html>
